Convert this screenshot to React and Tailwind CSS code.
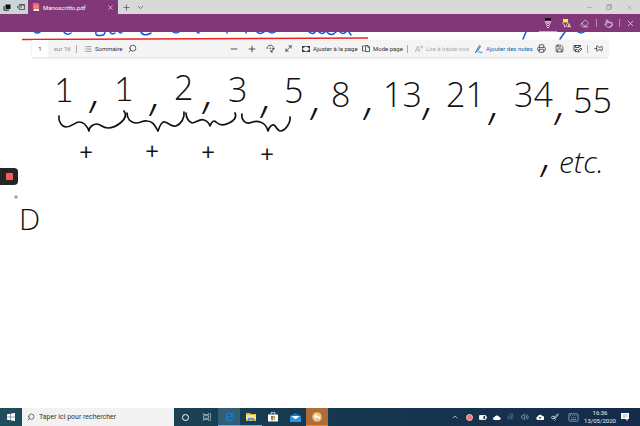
import React from "react";
import { Printer, Save, Search, Minus, Plus, X, ChevronDown, ChevronUp, List, Pin, Eraser, Keyboard, Volume2, Wifi, Pointer, MoveDiagonal } from "lucide-react";

const numbers = [
  { text: "2", x: 174, y: 100 },
  { text: "3", x: 228, y: 102 },
  { text: "5", x: 284, y: 103 },
  { text: "8", x: 331, y: 107 },
  { text: "13", x: 383, y: 107 },
  { text: "21", x: 446, y: 107 },
  { text: "34", x: 514, y: 107 },
  { text: "55", x: 573, y: 113 },
];

const commas = [
  [96, 107], [156, 110], [209, 108], [267, 112], [317, 114],
  [370, 114], [429, 114], [495, 119], [561, 119], [547, 171],
];

const pluses = [[86, 161], [152, 160], [208, 161], [267, 163]];

function Divider({ className }) {
  return <span className={`h-2 w-px shrink-0 ${className}`} />;
}

function IconButton({ label, className = "w-[18px]", children }) {
  return (
    <button aria-label={label} className={`flex h-full shrink-0 items-center justify-center ${className}`}>
      {children}
    </button>
  );
}

function TabStrip() {
  return (
    <header className="flex h-[14px] shrink-0 items-center bg-[#d9d9d9] text-[#555]">
      <div className="flex h-full w-7 shrink-0 bg-[#ccd5d5]">
        <IconButton label="Onglets mis de côté" className="w-[14px]">
          <svg viewBox="0 0 8 8" className="size-2"><path d="M2.5 1.500h5v4.500h-5z" fill="#111" /><path d="M1 3v4.2h5" fill="none" stroke="#222" /></svg>
        </IconButton>
        <IconButton label="Mettre les onglets de côté" className="w-[14px]">
          <svg viewBox="0 0 8 8" className="size-2" fill="none" stroke="#444" strokeWidth="0.8"><path d="M2.5 3V1.5h5v5h-5V5M2.5 2.2h5M0 4h5M1.5 2.8.3 4l1.2 1.2" /></svg>
        </IconButton>
      </div>
      <div className="flex h-full w-[90px] shrink-0 items-center bg-[#803878] pl-1 text-white">
        <svg viewBox="0 0 8 8" className="size-2 shrink-0"><path d="M1.5 0h4L7 1.5V8H1.5z" fill="#eee" /><path d="M.5 2.5h7v3.2h-7z" fill="#e43b3b" /><path d="M1.5 4h5" stroke="#fff" strokeWidth="1" strokeDasharray="1.4 .4" /><path d="M1.5 0h4L7 1.5v1H1.5z" fill="#e86a62" /></svg>
        <span className="ml-[3px] flex-1 whitespace-nowrap text-[6px]">Manoscritto.pdf</span>
        <IconButton label="Fermer l'onglet" className="w-4"><X size={7} strokeWidth={2} /></IconButton>
      </div>
      <IconButton label="Nouvel onglet" className="w-4"><Plus size={9} strokeWidth={2} /></IconButton>
      <IconButton label="Aperçu des onglets" className="w-3"><ChevronDown size={9} strokeWidth={2} /></IconButton>
      <div className="ml-auto flex h-full text-[#999]">
        <IconButton label="Réduire" className="w-5"><Minus size={7} strokeWidth={2} /></IconButton>
        <IconButton label="Restaurer" className="w-5">
          <svg viewBox="0 0 6 6" className="size-[6px]" fill="none" stroke="currentColor" strokeWidth="0.8"><path d="M.5 1.8h3.7v3.7H.5zM1.7 1.6V.5h3.8v3.8H4.4" /></svg>
        </IconButton>
        <IconButton label="Fermer" className="w-[21px]"><X size={7} strokeWidth={2} /></IconButton>
      </div>
    </header>
  );
}

function InkBar() {
  return (
    <div className="flex h-[18px] shrink-0 items-center justify-end bg-[#803878] text-[#eadbe8]">
      <IconButton label="Stylo" className="w-[18px] border-b border-[#c9a9c6]">
        <svg viewBox="0 0 10 12" className="h-3 w-[10px]"><path d="M2 1h6v2.500H2z" fill="#111" /><path d="M2 4l2 4.5h2L8 4M3.5 4.5h3L5 7zM3.500 9.500 5 11 6.500 9.500" fill="none" stroke="#eadbe8" strokeWidth=".9" /></svg>
      </IconButton>
      <IconButton label="Surligneur">
        <svg viewBox="0 0 9 9" className="size-[9px]"><path d="M1 0h5v3.500H1z" fill="#fff21c" /><path d="M1 3.500v1.500l1.500 1v2l2-1V5.500L6 3.500M6 8.500l1-4 1.500 4M5.500 7.500h3" fill="none" stroke="#f1e6cc" strokeWidth=".8" /></svg>
      </IconButton>
      <IconButton label="Gomme"><Eraser size={9} strokeWidth={2} /></IconButton>
      <Divider className="ml-[3px] bg-[#b98bb5]" />
      <IconButton label="Écriture tactile" className="w-[22px]"><Pointer size={9} strokeWidth={2} /></IconButton>
      <Divider className="bg-[#b98bb5]" />
      <IconButton label="Quitter les notes" className="w-5"><X size={9} strokeWidth={2} /></IconButton>
    </div>
  );
}

function PdfToolbar() {
  return (
    <div className="absolute inset-x-8 top-2 flex h-[17px] items-center whitespace-nowrap bg-[#f4f4f4] text-[6px] text-[#333] shadow">
      <input aria-label="Page" defaultValue="1" className="h-full w-4 shrink-0 bg-white text-center text-[#333]" />
      <span className="w-7 pl-[6px] text-[#888]">sur 16</span>
      <Divider className="bg-[#aaa]" />
      <button className="ml-[7px] flex w-[39px] items-center gap-[3px]"><List size={8} className="shrink-0 text-[#666]" />Sommaire</button>
      <IconButton label="Rechercher"><Search size={9} className="-scale-x-100" /></IconButton>
      <div className="ml-auto flex h-full">
        <IconButton label="Zoom arrière"><Minus size={10} /></IconButton>
        <IconButton label="Zoom avant"><Plus size={10} /></IconButton>
        <IconButton label="Faire pivoter">
          <svg viewBox="0 0 9 9" className="size-[9px]" fill="none" stroke="currentColor" strokeWidth=".8"><path d="M1.200 5A3.200 3.200 0 1 1 7.500 5L5 8M8.500 4 7.500 5.500 6 4.500M5 8V6M5 8h2" /><circle cx="4.300" cy="4.300" r=".5" /></svg>
        </IconButton>
        <IconButton label="Plein écran"><MoveDiagonal size={9} /></IconButton>
      </div>
      <button className="ml-[5px] flex w-[60px] items-center gap-[3px]">
        <svg viewBox="0 0 8 6" className="h-[6px] w-2 shrink-0" fill="none" stroke="#333"><path d="M.500.500h7v5h-7z" strokeWidth=".7" /><path d="M.7 2.200V.7h1.800M5.500.7h1.800v1.500M7.300 3.800v1.500H5.500M2.500 5.300H.7V3.800" strokeWidth="1.400" /></svg>
        Ajuster à la page
      </button>
      <button className="flex w-[45px] items-center gap-[3px]">
        <svg viewBox="0 0 8 7" className="h-[7px] w-2 shrink-0" fill="none" stroke="currentColor" strokeWidth=".8"><path d="M2.500 1h-2v5h2M3.5.5h2.5L7.500 2v4.500h-4zM5.800.5V2.200h1.700" /></svg>
        Mode page
      </button>
      <Divider className="bg-[#aaa]" />
      <button className="ml-[7px] flex w-[60px] items-center gap-[3px] text-[#aaa]">
        <svg viewBox="0 0 8 8" className="size-2 shrink-0" fill="none" stroke="currentColor" strokeWidth=".8"><path d="M.3 7 2.700 1 5 7M1.200 5h3M5.500 1q1 1 0 2M6.800.3q1.500 1.700 0 3.400" /></svg>
        Lire à haute voix
      </button>
      <button className="flex w-[57px] items-center gap-[3px] text-[#0f68b4]">
        <svg viewBox="0 0 8 8" className="size-2 shrink-0" fill="none" stroke="currentColor" strokeWidth=".9"><path d="M1.500 5.500 4.500.5l1 .7L3 5.500.5 7.500l1-2M3.500 7.200q1.500-1 2 0t2 0" /></svg>
        Ajouter des notes
      </button>
      <IconButton label="Imprimer"><Printer size={9} /></IconButton>
      <IconButton label="Enregistrer"><Save size={9} /></IconButton>
      <IconButton label="Enregistrer sous">
        <svg viewBox="0 0 9 9" className="size-[9px]" fill="none" stroke="currentColor" strokeWidth=".9"><path d="M4 7.500H2L1 6.500v-5h6.500V3M2.500 1.500v2H6v-2M2.500 7V5.500H4.500" /><path d="M4.800 8.200 5.300 6.500 7.800 4l1 1-2.500 2.600z" /></svg>
      </IconButton>
      <Divider className="ml-px bg-[#aaa]" />
      <IconButton label="Épingler" className="w-5"><Pin size={9} className="rotate-90" /></IconButton>
    </div>
  );
}

function Note() {
  return (
    <svg viewBox="0 32 640 376" preserveAspectRatio="xMinYMin meet" className="block w-full">
      <g fill="none" stroke="#1456d8" strokeWidth="1.500" strokeLinecap="round">
        <path d="M35 32.500q2.500 1 5-.5M64 32q3 4 7 1M96 32q-1 4 4 3.500 5 0 5-3.500M110 32q2 3 5 1M119 32q2 2 3 0M141 32q3 5 10 1M173 32q3 2 6 0M197 32l2 1M227 32v1M246 32v1M257 32q3 3 7 0M269 32q3 2 6 0M309 32q4 3 6 0M319 32q3 3 6 0M327 32q4 5 9 0M340 32q3 3 6 0M349 32l2 3" />
        <path d="M526 32l-3 7M565 32l-5 7M578 32q3 2 6 0" />
      </g>
      <path d="M22 39.500 368 38" stroke="#ee2222" strokeWidth="1.700" />
      <g fill="none" stroke="#111" strokeWidth="1.700" strokeLinecap="round" strokeLinejoin="round">
        <path d="M59 116c-1 5 3 11 7 11 6 0 9-5 13-5 5 0 8 4 10 9 0-4 4-7 8-7 4 0 5 4 11 4 7 0 22-9 16-17" />
        <path d="M127 113c0 6 4 10 9 10 5 0 7-3 11-2 6 0 8 5 11 10 2-6 4-10 7-9 4 1 6 5 11 4 5-2 9-8 8-14" />
        <path d="M186 113c0 5 3 9 6 10 4 0 8-5 12-3 3 1 5 3 6 6 2-5 4-6 6-4 4 4 9 3 13 1 5-2 8-6 6-10" />
        <path d="M242 114c-1 5 3 10 7 9 5-1 7-3 11-1 4 1 7 5 8 9 1-4 4-7 6-6 3 2 3 6 7 6 5-1 10-9 9-14" />
      </g>
      <g fill="#111" className="font-['Open_Sans'] text-[34px] font-light">
        <text x="54" y="102" className="font-['Lato']">1</text>
        <text x="114" y="101" className="font-['Lato']">1</text>
        {numbers.map((n) => <text key={n.text} x={n.x} y={n.y}>{n.text}</text>)}
      </g>
      <g fill="#111" className="font-['Open_Sans'] text-[30px] font-light">
        <text x="19" y="230">D</text>
        <text x="559" y="173" className="italic">etc.</text>
      </g>
      <g fill="#111" textAnchor="middle" className="font-['Open_Sans'] text-[48px] font-light italic">
        {commas.map(([x, y]) => <text key={x} x={x} y={y}>,</text>)}
      </g>
      <g fill="#111" textAnchor="middle" className="font-['Open_Sans'] text-[24px]">
        {pluses.map(([x, y]) => <text key={x} x={x} y={y}>+</text>)}
      </g>
      <circle cx="16" cy="197" r="1.200" fill="#ddd" stroke="#777" strokeWidth=".8" />
    </svg>
  );
}

function Taskbar() {
  return (
    <footer className="flex h-[18px] shrink-0 items-center bg-linear-to-r from-[#1f4d5c] via-[#17384f] to-[#142b4a] text-[#e6edf2]">
      <IconButton label="Démarrer" className="w-[22px]">
        <svg viewBox="0 0 8 8" className="size-2" fill="#fff"><path d="M0 1.200 3.500.7v3H0zM4 .6 8 0v3.700H4zM0 4.200h3.500v3L0 6.700zM4 4.200h4V8l-4-.6z" /></svg>
      </IconButton>
      <label className="flex h-full w-[152px] shrink-0 items-center bg-[#f2f2f2] pl-[5px] text-[#333]">
        <Search size={8} className="shrink-0 -scale-x-100" />
        <input aria-label="Rechercher" placeholder="Taper ici pour rechercher" className="ml-1 min-w-0 flex-1 text-[7px] placeholder:text-[#333]" />
      </label>
      <IconButton label="Cortana" className="w-[22px]"><span className="size-[7px] rounded-full border border-white" /></IconButton>
      <IconButton label="Affichage des tâches" className="w-[22px]">
        <svg viewBox="0 0 8 8" className="size-2" fill="none" stroke="#a9bbc5" strokeWidth=".8"><path d="M.5 0v1.500h5V0M.5 8V6.500h5V8M.5 2.700h5v2.600h-5zM7.300 0v8" /></svg>
      </IconButton>
      <IconButton label="Edge" className="w-[22px] border-b border-[#6ab0e0] bg-[#335f74]">
        <svg viewBox="0 0 10 10" className="size-[10px]"><path d="M.7 4.600C1.200 1.500 3.200.3 5.200.3c2.600 0 4.200 1.900 4.200 4.100v1.200H3.500c.1 2.300 3.200 2.600 5.300 1.200v2C5.500 10.500 1.500 9.500 1.500 6c0-1.700 1-2.800 2.300-3.500-.3.500-.4 1-.4 1.400h3.500C6.800.9 2.700 1.600.7 4.600z" fill="#1478d0" /></svg>
      </IconButton>
      <IconButton label="Explorateur" className="w-[22px] border-b border-[#6ab0e0]">
        <svg viewBox="0 0 10 8" className="h-2 w-[10px]"><path d="M0 0h4l1 1h5v7H0z" fill="#e9b93c" /><path d="M0 2h10v4H0z" fill="#ffe28a" /><path d="M2 8V5h6v3H6.500V6.500h-3V8z" fill="#3f9bdc" /></svg>
      </IconButton>
      <IconButton label="Store" className="w-[22px]">
        <svg viewBox="0 0 10 10" className="size-[10px]"><path d="M0 2.500h10v7H0z" fill="#fff" /><path d="M3 2.500V.7h4v1.800" fill="none" stroke="#fff" strokeWidth=".8" /><path d="M3 4h2v2H3z" fill="#e94f2e" /><path d="M5.200 4h2v2h-2z" fill="#7ab929" /><path d="M3 6.200h2v2H3z" fill="#1f9ce5" /><path d="M5.200 6.200h2v2h-2z" fill="#f8b81a" /></svg>
      </IconButton>
      <IconButton label="Courrier" className="w-[22px]">
        <svg viewBox="0 0 11 9" className="h-[9px] w-[11px]"><path d="M0 3 5.500 0 11 3v6H0z" fill="#1677c9" /><path d="M1 3h9L5.500 6.500z" fill="#fff" /><path d="M0 3l5.500 3.500L11 3v6H0z" fill="#2795e5" /></svg>
      </IconButton>
      <IconButton label="Capture vidéo" className="w-[22px] border-b border-[#f08b2c] bg-[#ad6c3c]">
        <svg viewBox="0 0 10 10" className="size-[10px]"><circle cx="5" cy="5" r="4.800" fill="#f5c16c" /><path d="M4.500 2.500 2.500 4.500l2 2M2.500 4.500h3q2 0 2 2.500" fill="none" stroke="#fff" strokeWidth="1.300" /></svg>
      </IconButton>
      <div className="ml-auto flex h-full items-center">
        <IconButton label="Icônes cachées" className="w-[15px]"><ChevronUp size={8} /></IconButton>
        <IconButton label="Enregistreur" className="w-[14px]"><span className="size-[7px] rounded-full border border-[#f5c5c2] bg-[#ee7772]" /></IconButton>
        <IconButton label="Batterie" className="w-[14px]">
          <svg viewBox="0 0 8 5" className="h-[5px] w-2"><path d="M.5.500h6v4h-6zM7.500 1.500v2" fill="none" stroke="#fff" strokeWidth=".9" /><path d="M1 1h3.500v3H1z" fill="#fff" /></svg>
        </IconButton>
        <IconButton label="OneDrive" className="w-[14px]">
          <svg viewBox="0 0 8 5" className="h-[5px] w-2" fill="#fff"><path d="M1.500 5a1.500 1.500 0 0 1 0-3A2.500 2.500 0 0 1 6 1.700 1.700 1.700 0 0 1 6.500 5z" /></svg>
        </IconButton>
        <IconButton label="Réseau" className="w-[14px] text-[#71879a]"><Wifi size={8} className="-rotate-45" /></IconButton>
        <IconButton label="Volume" className="w-[14px] text-[#a9b8c6]"><Volume2 size={8} /></IconButton>
        <IconButton label="Synchronisation" className="w-[15px]">
          <svg viewBox="0 0 8 6" className="h-[6px] w-2"><path d="M1.700 6a1.700 1.700 0 0 1-.2-3.300A2.600 2.600 0 0 1 6.300 2 2 2 0 0 1 6.500 6z" fill="#fff" /><path d="M4 5.200V3.200M3 4l1-1 1 1" fill="none" stroke="#17304b" strokeWidth=".8" /></svg>
        </IconButton>
        <IconButton label="Windows Ink" className="w-[15px]">
          <svg viewBox="0 0 8 8" className="size-2" fill="none" stroke="currentColor" strokeWidth=".8"><path d="M7 .5 3.500 4 3 5.500 4.500 5 7.500 1.500M3.500 3.500q-3-1-3 1t3 1q2 1 0 2" /></svg>
        </IconButton>
        <IconButton label="Clavier" className="w-[22px] text-[#8b9db0]"><Keyboard size={11} strokeWidth={2} /></IconButton>
        <time className="w-8 text-center text-[6px] leading-[8px]">16:36<br />13/05/2020</time>
        <IconButton label="Notifications" className="w-[18px]">
          <svg viewBox="0 0 8 8" className="size-2"><path d="M0 0h8v6H6.500v2l-2-2H0z" fill="#fff" /><path d="M1.500 1.800h5M1.500 3.200h5M1.500 4.600h3" stroke="#7b8796" strokeWidth=".5" /></svg>
        </IconButton>
        <span className="w-[6px]" />
      </div>
    </footer>
  );
}

export default function App() {
  return (
    <div className="flex h-screen flex-col overflow-hidden bg-white font-['Roboto',sans-serif]">
      <TabStrip />
      <InkBar />
      <main className="relative min-h-0 flex-1 overflow-hidden">
        <Note />
        <PdfToolbar />
        <button aria-label="Arrêter l'enregistrement" className="absolute top-[136px] left-0 flex h-[17px] w-[18px] items-center justify-center rounded-r-sm bg-[#252525]">
          <span className="size-[7px] rounded-[1px] bg-[#ff5a5a]" />
        </button>
      </main>
      <Taskbar />
    </div>
  );
}
